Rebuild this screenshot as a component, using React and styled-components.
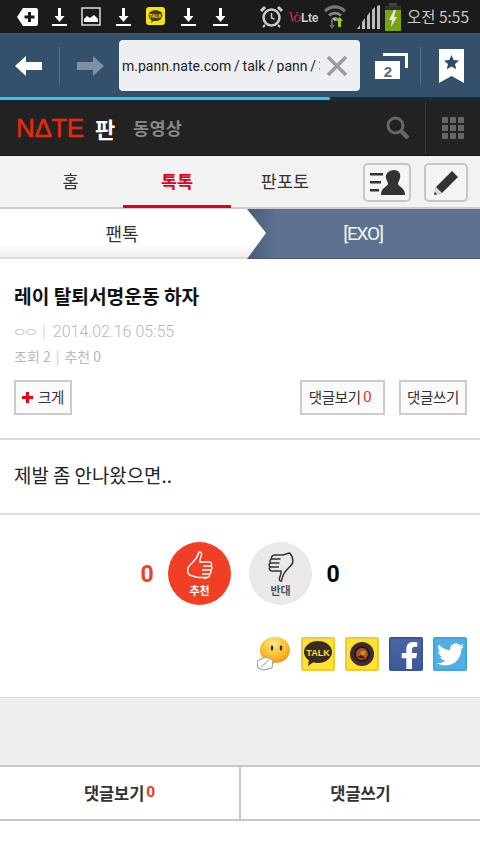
import React from 'react';
import styled, { createGlobalStyle } from 'styled-components';
import { FaFacebookF, FaTwitter } from 'react-icons/fa';

const Global = createGlobalStyle`
  html, body { margin: 0; padding: 0; background: #fff; }
  * { box-sizing: border-box; }
  body { font-family: "Noto Sans CJK KR", "Noto Sans", sans-serif; }
`;
const KR = `"Noto Sans CJK KR", "Noto Sans", sans-serif`;
const Page = styled.div`width: 480px; height: 853px; overflow: hidden; background: #fff; display: flex; flex-direction: column;`;

const StatusBar = styled.div`height: 33px; background: #1b1b1b; display: flex; align-items: center; justify-content: space-between; padding: 0 11px 0 17px;`;
const StatusGroup = styled.div`display: flex; align-items: center; gap: ${p => p.$gap}px;`;
const Clock = styled.span`font: 400 15.5px/1 ${KR}; color: #c9c9c9; margin-left: 1px; white-space: nowrap;`;
const DownloadSvg = styled.svg`margin-left: ${p => p.$ml || 0}px; flex: none;`;
const Download = ({ ml }) => (
  <DownloadSvg $ml={ml} width="15" height="20" viewBox="0 0 15 20"><path d="M6 1h3v8h3.500L7.500 15 2.500 9H6z" fill="#fff"/><rect x="0" y="17" width="15" height="2" fill="#fff"/></DownloadSvg>
);

const BrowserBar = styled.div`height: 64px; background: #34506a; border-top: 1px solid #3e5b76; display: flex; align-items: center; padding: 0 0 0 15px;`;
const VLine = styled.div`width: 1px; height: 37px; background: #5a7388; flex: none; margin: 0 ${p => p.$r}px 0 ${p => p.$l}px;`;
const UrlField = styled.div`width: 241px; height: 51px; background: #eeeff3; border-radius: 4px; display: flex; align-items: center; padding: 0 12px 0 3px; flex: none; margin-left: 15px; margin-right: 15px;`;
const UrlText = styled.div`flex: 1; overflow: hidden; white-space: nowrap; font: 400 14px/1 Roboto, sans-serif; color: #222; word-spacing: -.7px;`;

const Progress = styled.div`height: 4px; background: #1d2a35; flex: none;`;
const ProgressFill = styled.div`height: 3px; width: 330px; background: #34c5ea; border-radius: 0 2px 2px 0;`;

const NateBar = styled.div`height: 55px; background: #222; display: flex; align-items: center; padding: 0 16px 0 16px; border-bottom: 1px solid #111;`;
const NateLogo = styled.span`font: 400 26px/1 "Liberation Sans", sans-serif; color: #e52a0d; -webkit-text-stroke: .5px #e52a0d; letter-spacing: -.4px; width: 79px; white-space: nowrap;`;
const Pan = styled.span`font: 700 22px/1 ${KR}; color: #fff; width: 38px;`;
const Video = styled.span`font: 700 17.5px/1 ${KR}; color: #888; letter-spacing: .3px;`;
const Spacer = styled.div`flex: 1;`;
const BarLine = styled.div`width: 1px; height: 52px; background: #3a3a3a; margin: 0 16px 0 15px;`;

const TabBar = styled.div`height: 53px; background: #f2f2f2; border-bottom: 2px solid #ccc; display: flex; padding-left: 15px; position: relative;`;
const Tab = styled.div`width: 108px; height: 52px; display: flex; align-items: center; justify-content: center; font: ${p => p.$on ? 700 : 400} 17.5px/1 ${KR}; color: ${p => p.$on ? '#e8001c' : '#333'}; border-bottom: ${p => p.$on ? '3px solid #e0001a' : '3px solid transparent'}; padding-left: ${p => p.$shift || 0}px;`;
const ToolButtons = styled.div`display: flex; gap: 13px; margin-left: 24px; padding-top: 7px;`;
const ToolButton = styled.div`width: ${p => p.$w}px; height: 39px; border: 2px solid #c6c6c6; border-radius: 5px; background: #f4f4f4; display: flex; align-items: center; justify-content: center;`;

const Crumb = styled.div`height: 50px; background: linear-gradient(90deg, #3f5672 240px, #5c7290 275px); border-bottom: 1px solid #465a75; display: flex; position: relative; flex: none;`;
const CrumbLeft = styled.div`width: 266px; height: 50px; background: linear-gradient(#fff 70%, #efefef); border-bottom: 2px solid #ddd; clip-path: polygon(0 0, 247px 0, 266px 24px, 247px 50px, 0 50px); display: flex; align-items: center; justify-content: center; padding-right: 22px; font: 400 18px/1 ${KR}; color: #333;`;
const CrumbRight = styled.div`flex: 1; display: flex; align-items: center; justify-content: center; padding-right: 20px; font: 400 19px/1 "Roboto", sans-serif; color: #f2f4f7; letter-spacing: -1.2px;`;

const Article = styled.div`padding: 26px 13px 0 14px; height: 181px; border-bottom: 2px solid #ddd; flex: none;`;
const Title = styled.h1`margin: 0; height: 22px; font: 700 19.2px/22px ${KR}; color: #111;`;
const Meta = styled.div`margin-top: ${p => p.$mt}px; height: 18px; font: ${p => p.$w || 400} ${p => p.$s}px/18px ${p => p.$f || KR}; color: #b8b8b8; white-space: nowrap; display: flex; align-items: center;`;
const Sep = styled.span`color: #ccc; margin: 0 ${p => p.$r}px 0 ${p => p.$l}px;`;
const Jamo = styled.span`display: inline-block; font: 300 17px/18px ${KR}; letter-spacing: -4.5px; transform: scaleY(.72); margin-left: -2px; margin-right: 8px;`;
const Actions = styled.div`display: flex; margin-top: 15px; gap: 14px;`;
const SmallBtn = styled.div`height: 35px; width: ${p => p.$w}px; border: 2px solid #ccc; background: #fafafa; display: flex; align-items: center; justify-content: center; font: 400 14.5px/1 ${KR}; color: #333; letter-spacing: -.3px; padding-right: ${p => p.$pr || 0}px; ${p => p.$push ? 'margin-left: auto;' : ''}`;
const RedNum = styled.span`color: ${p => p.$c || '#f03a1c'}; margin-left: 2px; font-family: Roboto, sans-serif; font-size: 15.5px; font-weight: ${p => p.$b ? 700 : 400};`;
const Plus = styled.span`width: 11px; height: 11px; margin-right: 5px; background: linear-gradient(#e8000f,#e8000f) center/11px 3px no-repeat, linear-gradient(#e8000f,#e8000f) center/3px 11px no-repeat;`;

const Body = styled.div`height: 75px; padding-left: 14px; display: flex; align-items: center; border-bottom: 2px solid #ddd; font: 400 18.9px/1 ${KR}; color: #222; flex: none; padding-bottom: 2px;`;

const VoteArea = styled.div`height: 156px; flex: none; display: flex; flex-direction: column;`;
const VoteRow = styled.div`display: flex; justify-content: center; align-items: center; margin-top: 27px; height: 63px;`;
const VoteCount = styled.span`width: 20px; font: 700 23px/1 Roboto, sans-serif; color: ${p => p.$c}; text-align: center; padding-top: 2px;`;
const VoteCircle = styled.div`width: 63px; height: 63px; border-radius: 50%; background: ${p => p.$bg}; display: flex; flex-direction: column; align-items: center; justify-content: center; font: 700 11px/13px ${KR}; color: ${p => p.$c}; margin: 0 ${p => p.$r}px 0 ${p => p.$l}px; flex: none;`;
const VoteLabel = styled.span`margin-top: 2px;`;

const ShareRow = styled.div`display: flex; justify-content: flex-end; gap: 10px; padding-right: 13px; margin-top: 32px; height: 34px;`;
const Square = styled.div`width: 34px; height: 34px; border: 2px solid ${p => p.$b}; background: ${p => p.$bg}; border-radius: 2px; display: flex; align-items: ${p => p.$end ? 'flex-end' : 'center'}; justify-content: center; color: #fff; overflow: hidden;`;
const EmojiSvg = styled.svg`margin-top: -1px;`;
const FbGlyph = styled(FaFacebookF)`margin-left: 7px; margin-bottom: -2px;`;

const GrayBand = styled.div`margin-top: 26px; height: 70px; background: #efefef; border-top: 1px solid #ddd; border-bottom: 2px solid #c8c8c8; flex: none;`;
const BottomRow = styled.div`display: grid; grid-template-columns: 239px 1fr; height: 54px; border-bottom: 2px solid #c8c8c8; flex: none;`;
const BottomBtn = styled.div`display: flex; align-items: center; justify-content: center; font: 700 16.5px/1 ${KR}; color: #333; letter-spacing: -.1px; & + & { border-left: 2px solid #c8c8c8; }`;
const TightSvg = styled.svg`margin-left: ${p => p.$ml || 0}px; flex: none;`;

export default function App() {
  return (
    <Page>
      <Global />
      <StatusBar>
        <StatusGroup $gap={15}>
          <svg width="21" height="18" viewBox="0 0 21 18"><path d="M6 0h13a2 2 0 0 1 2 2v14a2 2 0 0 1-2 2H6L0 9z" fill="#fff"/><path d="M11 4h3v3.500h3.500v3H14V14h-3v-3.500H7.500v-3H11z" fill="#1b1b1b"/></svg>
          <Download ml={-1} />
          <TightSvg $ml={-1} width="20" height="19" viewBox="0 0 20 19"><rect x="1" y="1" width="18" height="17" fill="none" stroke="#ddd" strokeWidth="1.500"/><path d="M3 15v-3l3-3 3 2 4-3 4 4v3z" fill="#fff"/></TightSvg>
          <Download />
          <svg width="20" height="19" viewBox="0 0 20 19"><rect width="19" height="18" rx="3" fill="#f7e600"/><ellipse cx="9.500" cy="8.500" rx="7" ry="5.500" fill="#4a3a22"/><path d="M6 12l-1 4 4-3z" fill="#4a3a22"/><text x="9.500" y="10.500" textAnchor="middle" fontSize="5" fontWeight="700" fontFamily="Liberation Sans" fill="#f7e600">TALK</text></svg>
          <Download />
          <Download ml={2} />
        </StatusGroup>
        <StatusGroup $gap={5}>
          <svg width="23" height="23" viewBox="0 0 23 23" fill="none" stroke="#ccc"><circle cx="11.500" cy="12.500" r="8" strokeWidth="2.500"/><path d="M11.500 8v5l3 1" strokeWidth="1.500"/><path d="M1 6l4-4M22 6l-4-4" strokeWidth="3"/><path d="M5 20l-2 2M18 20l2 2" strokeWidth="2"/></svg>
          <svg width="32" height="18" viewBox="0 0 32 18"><text x="0" y="14"><tspan fontSize="15" fontStyle="italic" fontFamily="Liberation Serif" fill="#c0245c" letterSpacing="-2">Vo</tspan><tspan dx="2" fontSize="12" fontWeight="700" fontFamily="Liberation Sans" fill="#ccc" letterSpacing="-.3">Lte</tspan></text></svg>
          <TightSvg $ml={-2} width="24" height="25" viewBox="0 0 24 25"><path d="M1 6a15 15 0 0 1 22 0l-2 2.500a12 12 0 0 0-18 0z" fill="#777"/><path d="M5 10.500a10 10 0 0 1 14 0l-2 2a7 7 0 0 0-10 0z" fill="#888"/><path d="M9 14.500a4 4 0 0 1 6 0l-3 3z" fill="#aaa"/><path d="M8 15v6h-2l3 4 3-4h-2v-6z" fill="#666"/><path d="M15 23v-6h-2l3.500-4 3.500 4h-2v6z" fill="#8fd01a"/></TightSvg>
          <TightSvg $ml={5} width="23" height="24" viewBox="0 0 23 24"><path d="M0 24l3-4v4zM5 24v-7l3-4v11zM10 24V11l3-4v17zM15 24V5l3-3v22zM20 24V1l3-1v24z" fill="#bbb"/></TightSvg>
          <svg width="16" height="28" viewBox="0 0 16 28"><rect x="4" y="0" width="8" height="3" fill="#444"/><rect x="0" y="3" width="16" height="25" fill="#7aa312"/><rect x="0" y="3" width="16" height="4" fill="#333"/><path d="M9 7L4 17h3l-1 7 6-10H9l2-7z" fill="#e8e8e8"/></svg>
          <Clock>오전 5:55</Clock>
        </StatusGroup>
      </StatusBar>

      <BrowserBar>
        <svg width="28" height="20" viewBox="0 0 28 20"><path d="M0 10L11 0v6h16v8H11v6z" fill="#fff"/></svg>
        <VLine $l={16} $r={16} />
        <svg width="28" height="20" viewBox="0 0 28 20"><path d="M28 10L17 0v6H1v8h16v6z" fill="#7d91a2"/></svg>
        <UrlField>
          <UrlText>m.pann.nate.com / talk / pann / 3</UrlText>
          <TightSvg $ml={6} width="22" height="22" viewBox="0 0 22 22"><path d="M2 2l18 18M20 2L2 20" stroke="#9c9c9c" strokeWidth="3.500"/></TightSvg>
        </UrlField>
        <svg width="33" height="26" viewBox="0 0 33 26"><path d="M8 0h25v15h-3V3H8z" fill="#fff"/><rect x="0" y="8" width="25" height="18" fill="#fff"/><text x="13" y="24" textAnchor="middle" fontSize="15" fontWeight="700" fontFamily="Liberation Sans" fill="#4d6c8c">2</text></svg>
        <VLine $l={12} $r={18} />
        <svg width="25" height="34" viewBox="0 0 25 34"><path d="M0 0h25v34l-12.500-7L0 34z" fill="#fff"/><path d="M12.500 6l2.200 5 5.300.5-4 3.500 1.200 5.300-4.700-2.800-4.700 2.800L9 15 5 11.500l5.300-.5z" fill="#2f4b67"/></svg>
      </BrowserBar>

      <Progress><ProgressFill /></Progress>

      <NateBar>
        <NateLogo>NΔTE</NateLogo>
        <Pan>판</Pan>
        <Video>동영상</Video>
        <Spacer />
        <svg width="24" height="24" viewBox="0 0 24 24" fill="none" stroke="#666"><circle cx="9.500" cy="9.500" r="7.500" strokeWidth="3"/><path d="M15 15l7 7" strokeWidth="4.500"/></svg>
        <BarLine />
        <svg width="22" height="22" viewBox="0 0 22 22" fill="#666"><rect width="6" height="6"/><rect x="8" width="6" height="6"/><rect x="16" width="6" height="6"/><rect y="8" width="6" height="6"/><rect x="8" y="8" width="6" height="6"/><rect x="16" y="8" width="6" height="6"/><rect y="16" width="6" height="6"/><rect x="8" y="16" width="6" height="6"/><rect x="16" y="16" width="6" height="6"/></svg>
      </NateBar>

      <TabBar>
        <Tab $shift={3}>홈</Tab>
        <Tab $on>톡톡</Tab>
        <Tab>판포토</Tab>
        <ToolButtons>
          <ToolButton $w={48}>
            <svg width="35" height="25" viewBox="0 0 35 25"><path d="M0 3h13v2.500H0zM0 11h11v2.500H0zM0 19h9v2.500H0z" fill="#333"/><path d="M24 0c5 0 7 4 6 8-.5 2.500-2 4-2 6 0 2 7 4 7 10v1H11v-1c0-6 7-8 7-10 0-2-1.500-3.500-2-6-1-4 3-8 8-8z" fill="#333"/></svg>
          </ToolButton>
          <ToolButton $w={44}>
            <svg width="26" height="26" viewBox="0 0 26 26"><path d="M19 1l6 6L9 23 1 25l2-8z" fill="#333"/><path d="M3 17l6 6-8 2z" fill="#ddd"/><path d="M1 25l3-1-2-2z" fill="#333"/></svg>
          </ToolButton>
        </ToolButtons>
      </TabBar>

      <Crumb>
        <CrumbLeft>팬톡</CrumbLeft>
        <CrumbRight>[EXO]</CrumbRight>
      </Crumb>

      <Article>
        <Title>레이 탈퇴서명운동 하자</Title>
        <Meta $mt={16} $s={16} $w={300} $f="Roboto, sans-serif">
          <Jamo>ㅇㅇ</Jamo><Sep $l={0} $r={7}>|</Sep>2014.02.16 05:55
        </Meta>
        <Meta $mt={6} $s={14}>
          조회 2<Sep $l={5} $r={5}>|</Sep>추천 0
        </Meta>
        <Actions>
          <SmallBtn $w={58}><Plus />크게</SmallBtn>
          <SmallBtn $w={85} $pr={5} $push>댓글보기<RedNum>0</RedNum></SmallBtn>
          <SmallBtn $w={68}>댓글쓰기</SmallBtn>
        </Actions>
      </Article>

      <Body>제발 좀 안나왔으면..</Body>

      <VoteArea>
        <VoteRow>
          <VoteCount $c="#f03f24">0</VoteCount>
          <VoteCircle $bg="#f03f24" $c="#fff" $l={11} $r={18}>
            <svg width="28" height="31" viewBox="0 0 28 31" fill="none" stroke="#fff" strokeWidth="1.400"><path d="M13 1c2-.5 3 1 2.500 3-.5 2-2 4-1.500 7l9 0c3 0 3 3 2 4 1.500 1.500 1 3.500-.5 4 1 1.500.5 3.500-1 4 .5 2-1 3.500-3 3.500h-7c-4 0-6-1-8-2C3 25 1 21 2 17c.5-2 3-4 5-6 3-3 5-6 6-10z"/><path d="M17 15h8M16 19h8M16 23h7M17 27h4"/></svg>
            <VoteLabel>추천</VoteLabel>
          </VoteCircle>
          <VoteCircle $bg="#e9e9e9" $c="#555" $l={0} $r={11}>
            <svg width="27" height="31" viewBox="0 0 27 31" fill="none" stroke="#333" strokeWidth="1.500"><path d="M15 30c-2 .5-3-1-2.500-3 .5-2 2-4 1.500-7l-9 0c-3 0-3-3-2-4-1.500-1.500-1-3.500.5-4-1-1.500-.5-3.500 1-4C4 6 5.500 4 7.500 4h7c4 0 6-2 8-2 2 2 4 6 3 10-.5 2-3 4-5 6-3 3-5 6-6 12z"/><path d="M3 16h9M3.500 12h9M4.500 8h9"/></svg>
            <VoteLabel>반대</VoteLabel>
          </VoteCircle>
          <VoteCount $c="#000">0</VoteCount>
        </VoteRow>

        <ShareRow>
          <EmojiSvg width="34" height="36" viewBox="0 0 34 36">
            <defs><radialGradient id="em" cx=".45" cy=".25" r=".8"><stop offset="0" stopColor="#ffe98a"/><stop offset=".55" stopColor="#fbbd2a"/><stop offset="1" stopColor="#ee8a12"/></radialGradient></defs>
            <path d="M18 1c9 0 15 6 15 13s-6 13-15 13c-2 0-5 2-8 2 1-2 1-3 0-4C5 22 3 18 3 14 3 7 9 1 18 1z" fill="url(#em)"/>
            <ellipse cx="15" cy="12" rx="1.300" ry="2.800" fill="#333"/><ellipse cx="24" cy="12" rx="1.300" ry="2.800" fill="#333"/>
            <path d="M0 25l9-4 7 3-1 8-8 2-6-2z" fill="#fff" stroke="#999"/><path d="M4 31l8-7" stroke="#999"/>
          </EmojiSvg>
          <Square $b="#f0c93a" $bg="#fde32c">
            <svg width="30" height="28" viewBox="0 0 30 28"><ellipse cx="15" cy="12" rx="14" ry="11" fill="#3a2a20"/><path d="M6 19l-1 7 7-5z" fill="#3a2a20"/><text x="15" y="15.500" textAnchor="middle" fontSize="9" fontWeight="700" fontFamily="Liberation Sans" fill="#fde32c">TALK</text></svg>
          </Square>
          <Square $b="#f0c93a" $bg="#fde32c">
            <svg width="26" height="26" viewBox="0 0 26 26"><circle cx="13" cy="13" r="12" fill="#3f2a3c"/><circle cx="13" cy="13" r="8" fill="#2a1a12"/><circle cx="13" cy="13" r="6" fill="#a8521c"/><circle cx="14" cy="12" r="2.500" fill="#d98a2a"/><path d="M8 16l5-2 3 4z" fill="#3a1a08"/></svg>
          </Square>
          <Square $b="#3b5590" $bg="linear-gradient(#4a66a5,#3d5a98)" $end>
            <FbGlyph size={29} />
          </Square>
          <Square $b="#42a5df" $bg="#52aee5">
            <FaTwitter size={27} />
          </Square>
        </ShareRow>
      </VoteArea>

      <GrayBand />
      <BottomRow>
        <BottomBtn>댓글보기<RedNum $b>0</RedNum></BottomBtn>
        <BottomBtn>댓글쓰기</BottomBtn>
      </BottomRow>
    </Page>
  );
}
